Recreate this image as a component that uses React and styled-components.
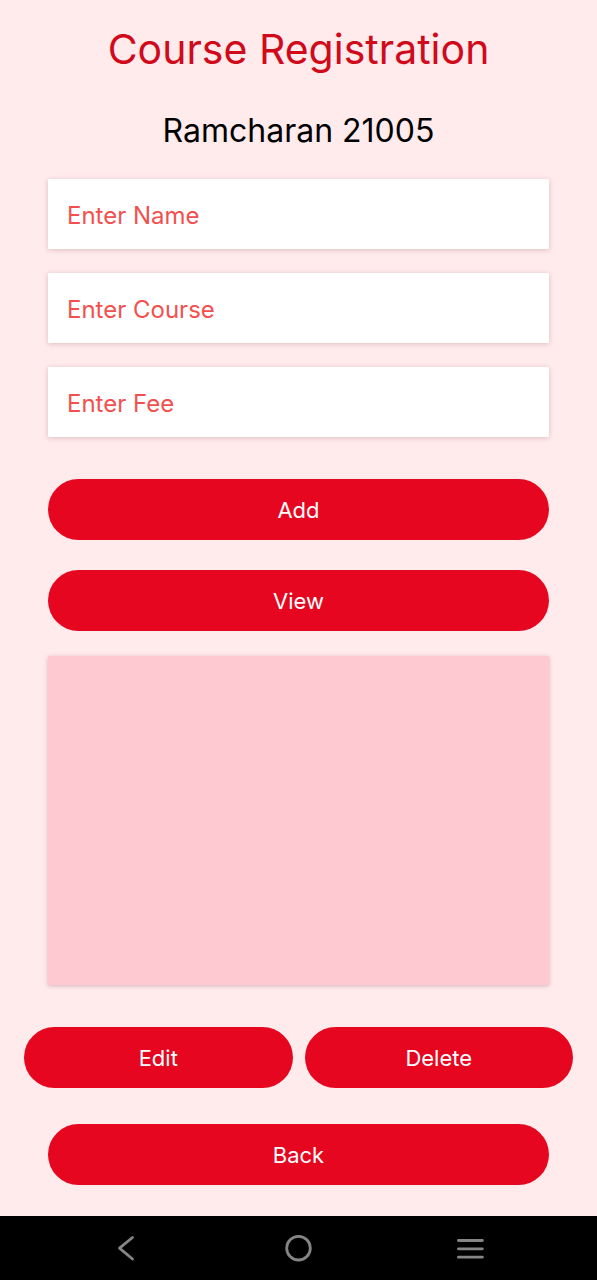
import React from 'react';
import styled, { createGlobalStyle } from 'styled-components';

const GlobalStyle = createGlobalStyle`
  * { box-sizing: border-box; }
  body { margin: 0; background: #ffeaec; font-family: Inter, "Liberation Sans", sans-serif; }
`;

const Screen = styled.div`
  min-height: 100vh;
  display: flex;
  flex-direction: column;
  background: #ffeaec;
`;

const Content = styled.main`
  flex: 1;
  display: flex;
  flex-direction: column;
  padding: 25px 48px 31px;
`;

const Title = styled.h1`
  margin: 0;
  font-size: 41px;
  line-height: 48px;
  font-weight: 400;
  text-align: center;
  color: #d00a1b;
`;

const Subtitle = styled.h2`
  margin: 42px 0 32px;
  font-size: 32px;
  line-height: 32px;
  font-weight: 400;
  text-align: center;
  color: #000;
`;

const Fields = styled.form`
  display: flex;
  flex-direction: column;
  gap: 24px;
`;

const Field = styled.input`
  width: 100%;
  height: 70px;
  padding: 2px 19px 0;
  border: 0;
  border-radius: 1px;
  background: #fff;
  box-shadow: 0 1px 5px rgba(120, 60, 65, 0.25);
  color: #d00a1b;
  font-family: inherit;
  font-size: 24px;
  &::placeholder { color: #f2504f; opacity: 1; }
`;

const Button = styled.button`
  width: 100%;
  height: 61px;
  padding: 1px 0 0;
  border: 0;
  border-radius: 31px;
  background: #e6061f;
  color: #fff;
  font-family: inherit;
  font-size: 22px;
  font-weight: 400;
`;

const Actions = styled.div`
  display: flex;
  flex-direction: column;
  gap: 30px;
  margin: 42px 0 25px;
`;

const Records = styled.section`
  flex: 1;
  min-height: 200px;
  background: #ffc9d1;
  box-shadow: 0 1px 4px rgba(120, 60, 65, 0.3);
`;

const Pair = styled.div`
  display: grid;
  grid-template-columns: 1fr 1fr;
  gap: 12px;
  margin: 42px -24px 36px;
`;

const NavBar = styled.nav`
  display: grid;
  grid-template-columns: repeat(3, 1fr);
  justify-items: center;
  align-items: center;
  height: 64px;
  padding: 0 40px;
  background: #000;
`;

const NavButton = styled.button`
  display: flex;
  padding: 0;
  border: 0;
  background: none;
  color: #858585;
`;

const Icon = styled.svg`
  width: 32px;
  height: 32px;
  fill: none;
  stroke: currentColor;
  stroke-width: 2.8;
  stroke-linecap: round;
  stroke-linejoin: round;
`;

export default function App() {
  return (
    <Screen>
      <GlobalStyle />
      <Content>
        <Title>Course Registration</Title>
        <Subtitle>Ramcharan 21005</Subtitle>
        <Fields id="course-form">
          <Field aria-label="Name" placeholder="Enter Name" />
          <Field aria-label="Course" placeholder="Enter Course" />
          <Field aria-label="Fee" placeholder="Enter Fee" />
        </Fields>
        <Actions>
          <Button type="button">Add</Button>
          <Button type="button">View</Button>
        </Actions>
        <Records aria-label="Courses" />
        <Pair>
          <Button type="button">Edit</Button>
          <Button type="button">Delete</Button>
        </Pair>
        <Button type="button">Back</Button>
      </Content>
      <NavBar>
        <NavButton aria-label="Previous screen">
          <Icon viewBox="0 0 32 32"><path d="M22.5 5.5 9.5 16.2l13 10.8" /></Icon>
        </NavButton>
        <NavButton aria-label="Home">
          <Icon viewBox="0 0 32 32"><circle cx="16.5" cy="16.2" r="11.8" /></Icon>
        </NavButton>
        <NavButton aria-label="Menu">
          <Icon viewBox="0 0 32 32"><path d="M3.4 8.5h24M3.4 16.8h24M3.4 25.2h24" /></Icon>
        </NavButton>
      </NavBar>
    </Screen>
  );
}
